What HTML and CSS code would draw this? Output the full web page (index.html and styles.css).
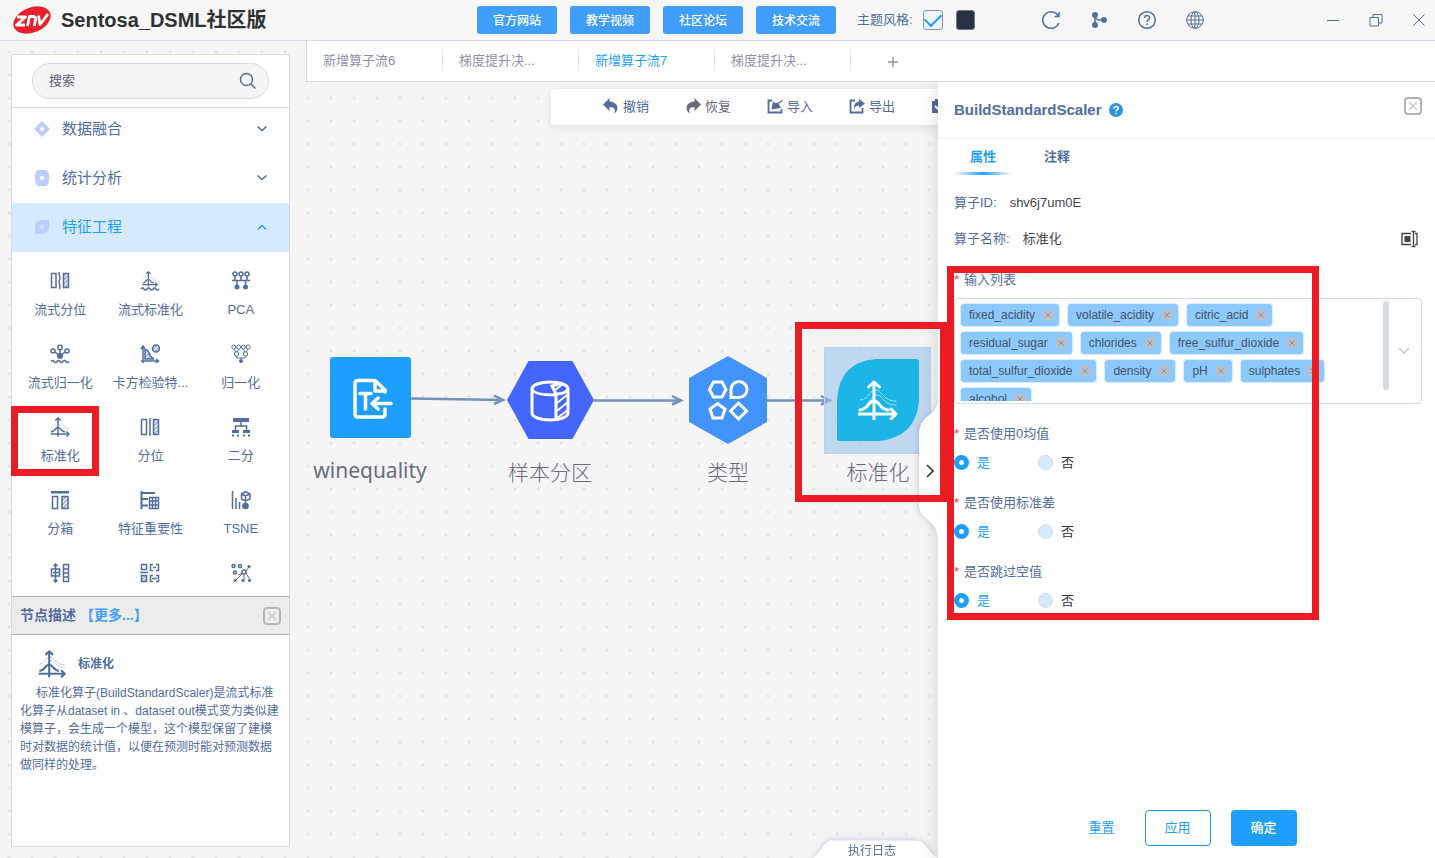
FILE: index.html
```html
<!DOCTYPE html>
<html lang="zh-CN">
<head>
<meta charset="utf-8">
<title>Sentosa_DSML社区版</title>
<link rel="stylesheet" href="styles.css">
</head>
<body>
<svg class="defs" width="0" height="0" aria-hidden="true">
  <defs>
    <pattern id="hatch" width="3" height="3" patternUnits="userSpaceOnUse" patternTransform="rotate(45)"><path d="M1 0v3" stroke="#526d9f" stroke-width="1"/></pattern>
    <symbol id="i-norm" viewBox="0 0 40 40">
      <path d="M16 39V4M10.500 7L16 2l5.500 5" stroke-width="3"/>
      <path d="M1 34h36M33 29l5 5-5 5" stroke-width="3"/>
      <path d="M2 30c9-1 8-9 14-9s5 8 14 9" stroke-width="3"/>
      <path d="M2 20c10-1 9-10 15-10 7 0 8 11 21 11M8 25c6-5 6-10 11-10 5 0 7 10 19 10" stroke-width="1" stroke-dasharray="3 1.500" opacity=".65"/>
    </symbol>
    <symbol id="i-closebox" viewBox="0 0 18 18"><rect x="1" y="1" width="16" height="16" rx="3" fill="none" stroke="#b3b3b3" stroke-width="2"/><path d="M5 5l8 8M13 5l-8 8" stroke="#d6c0c0" stroke-width="1.300"/></symbol>
    <symbol id="i-x" viewBox="0 0 12 12"><circle cx="6" cy="6" r="6" fill="#b9bec9"/><path d="M3.500 3.500l5 5M8.500 3.500l-5 5" stroke="#8b919c"/></symbol>
  </defs>
</svg>
<div class="app">
  <header class="topbar">
    <div class="brand">
      <svg width="38" height="30" viewBox="0 0 38 30"><ellipse cx="19" cy="15" rx="19.500" ry="12.500" transform="rotate(-22 19 15)" fill="#e8202b"/><g fill="none" stroke="#fff" stroke-width="2.800" stroke-linejoin="round"><path d="M4 12h8.500L3.500 20H12"/><path d="M14.500 21l2-9.500h3.500q3 0 2.500 3L21.300 21"/><path d="M25.500 10.500l1.500 9 8-10.500"/></g></svg>
      <h1>Sentosa_DSML社区版</h1>
    </div>
    <nav class="links">
      <button>官方网站</button><button>教学视频</button><button>社区论坛</button><button>技术交流</button>
    </nav>
    <div class="theme">
      <label for="theme-light">主题风格:</label>
      <input type="checkbox" id="theme-light" checked>
      <button class="swatch" aria-label="深色主题"></button>
    </div>
    <div class="utils">
      <button aria-label="刷新"><svg width="20" height="20" viewBox="0 0 20 20"><path d="M17.800 13A8.300 8.300 0 1 1 17 5.500M18 2v4.500h-4.500" class="ln"/></svg></button>
      <button aria-label="流程"><svg width="20" height="20" viewBox="0 0 20 20"><g fill="#526d9f"><circle cx="6" cy="5" r="3"/><circle cx="6" cy="15" r="3"/><circle cx="15" cy="10" r="3"/></g><path d="M6 5v10M6 7.500L9 10h6" class="ln"/></svg></button>
      <button aria-label="帮助"><svg width="20" height="20" viewBox="0 0 20 20"><circle cx="10" cy="10" r="8.300" class="ln"/><path d="M7.500 8c0-3.500 5-3.300 5-.3 0 2-2.500 2-2.500 4.300M10 13.500v1.500" class="ln"/></svg></button>
      <button aria-label="语言"><svg width="20" height="20" viewBox="0 0 20 20"><g class="ln thin"><circle cx="10" cy="10" r="8.300"/><ellipse cx="10" cy="10" rx="4" ry="8.300"/><path d="M10 1.700v16.600M1.700 10h16.600M3 6h14M3 14h14"/></g></svg></button>
    </div>
    <div class="win">
      <button aria-label="最小化"><svg width="14" height="14" viewBox="0 0 14 14"><path d="M1 7.500h12" class="ln thin"/></svg></button>
      <button aria-label="还原"><svg width="14" height="14" viewBox="0 0 14 14"><path d="M1 4.500h8.500v8.500H1zM4 4.500V1.500h9v8.500H9.500" class="ln thin"/></svg></button>
      <button aria-label="关闭"><svg width="14" height="14" viewBox="0 0 14 14"><path d="M1.500 1.500l11 11M12.500 1.500l-11 11" class="ln thin"/></svg></button>
    </div>
  </header>

  <div class="body">
    <aside class="sidebar">
      <div class="search">
        <div class="searchbox">
          <input type="text" placeholder="搜索" aria-label="搜索">
          <svg width="18" height="18" viewBox="0 0 18 18"><circle cx="7.500" cy="7.500" r="6" class="ln"/><path d="M12 12l4.500 4.500" class="ln" stroke-width="2"/></svg>
        </div>
      </div>
      <div class="menu">
        <button class="cat"><svg width="16" height="16" viewBox="0 0 16 16"><path d="M8 0l8 8-8 8-8-8z" fill="#bccdff"/><circle cx="8" cy="8" r="2" fill="#fff"/></svg><span>数据融合</span><svg class="chev" width="12" height="8" viewBox="0 0 12 8"><path d="M1.500 1.500L6 5.500l4.500-4" class="ln"/></svg></button>
        <button class="cat"><svg width="16" height="16" viewBox="0 0 16 16"><path d="M4 0h8q3 2 3 5v6q0 3-3 5H4q-3-2-3-5V5q0-3 3-5z" fill="#bccdff"/><circle cx="8" cy="8" r="2" fill="#fff"/></svg><span>统计分析</span><svg class="chev" width="12" height="8" viewBox="0 0 12 8"><path d="M1.500 1.500L6 5.500l4.500-4" class="ln"/></svg></button>
        <button class="cat open"><svg width="16" height="16" viewBox="0 0 16 16"><path d="M1 15V8Q1 1 8 1h7v7q0 7-7 7z" fill="#bccdff"/><circle cx="8" cy="8" r="2" fill="#d6eafe"/></svg><span>特征工程</span><svg class="chev" width="12" height="8" viewBox="0 0 12 8"><path d="M2 6.500l4-4 4 4" fill="none" stroke="#1e9fff" stroke-width="1.500"/></svg></button>
        <ul class="tools">
          <li><svg viewBox="0 0 20 20"><g class="ln"><rect x="1.500" y="2.500" width="4.500" height="14"/><rect x="13.500" y="2.500" width="5" height="14" fill="url(#hatch)"/><path d="M9.500 1q-1 2 0 4t0 4 0 4 0 5"/></g></svg><span>流式分位</span></li>
          <li><svg viewBox="0 0 20 20"><use href="#i-norm" x="2" y="0" width="16" height="16" class="tint"/><path d="M1 18q1.500-2 3 0t3 0 3 0 3 0 3 0 3 0" class="ln"/></svg><span>流式标准化</span></li>
          <li><svg viewBox="0 0 20 20"><g class="ln"><circle cx="4" cy="3" r="2"/><circle cx="10" cy="3" r="2"/><circle cx="16" cy="3" r="2"/><path d="M4 5v4.500M10 5v4.500M16 5v4.500M1 9.500h18M6 10v6M14.500 10v6"/></g><circle cx="6" cy="16" r="2.500" fill="#526d9f"/><circle cx="14.500" cy="16" r="2.500" fill="#526d9f"/></svg><span>PCA</span></li>
          <li><svg viewBox="0 0 20 20"><g class="ln"><circle cx="3" cy="7" r="2"/><circle cx="10" cy="3.500" r="2.200"/><circle cx="17" cy="7" r="2"/><path d="M10 6v6M5 8l5 4 5-4M1 17.500q1.500-2 3 0t3 0 3 0 3 0 3 0 3 0"/></g><circle cx="10" cy="12" r="3" fill="#526d9f"/></svg><span>流式归一化</span></li>
          <li><svg viewBox="0 0 20 20"><g class="ln"><path d="M3 19V3M1 5l2-3 2 3M1 17h17M16 15l2.500 2-2.500 2"/></g><g fill="url(#hatch)" stroke="#526d9f" stroke-width="1.500"><path d="M5 15V6q3-1 4 3t5 6z"/><circle cx="16" cy="4.500" r="3.500"/></g></svg><span>卡方检验特...</span></li>
          <li><svg viewBox="0 0 20 20"><g class="ln thin"><circle cx="2.800" cy="3" r="2"/><circle cx="7.600" cy="3" r="2"/><circle cx="12.400" cy="3" r="2"/><circle cx="17.200" cy="3" r="2"/><circle cx="5.500" cy="10" r="2.200"/><circle cx="14.500" cy="10" r="2.200"/><path d="M3 5l2 3M8 5L6 8M12 5l2 3M17 5l-2 3M5 12l1 2h8l1-2M10 14v2"/></g><circle cx="10" cy="17" r="2" fill="#526d9f"/></svg><span>归一化</span></li>
          <li><svg viewBox="0 0 20 20"><use href="#i-norm" width="20" height="20" class="tint"/></svg><span>标准化</span></li>
          <li><svg viewBox="0 0 20 20"><g class="ln"><rect x="1.500" y="2.500" width="5" height="15"/><path d="M10 1v18"/><rect x="13.500" y="2.500" width="5" height="15" fill="url(#hatch)"/></g></svg><span>分位</span></li>
          <li><svg viewBox="0 0 20 20"><g fill="#526d9f"><path d="M2 1h16v4H2zM1 13h7v3H1zM12 13h7v3h-7z"/><path d="M1 17.500h2v2H1zM6 17.500h2v2H6zM12 17.500h2v2h-2zM17 17.500h2v2h-2z"/></g><path d="M10 5v4M4.500 13V9h11v4" class="ln"/></svg><span>二分</span></li>
          <li><svg viewBox="0 0 20 20"><path d="M1 1h18v2.500H1z" fill="#526d9f"/><g class="ln"><rect x="2.500" y="6.500" width="5" height="12"/><rect x="12" y="6.500" width="6" height="12" fill="url(#hatch)"/></g></svg><span>分箱</span></li>
          <li><svg viewBox="0 0 20 20"><g fill="none" stroke="#526d9f" stroke-width="2"><path d="M1.500 1v18M1 3h14M1 9h7M1 15.500h7"/></g><path d="M9.500 7.500h9v11h-9zM12.500 7.500v11M15.500 7.500v11M9 11h10M9 15h10" class="ln"/></svg><span>特征重要性</span></li>
          <li><svg viewBox="0 0 20 20"><g class="ln"><path d="M1.500 1v18M5 8v11M8.500 12v7"/><path d="M10.500 4l4-2.500L19 4v5l-4.500 2L10.500 9zM10.500 4l4 2 4.500-2M14.500 6v8"/></g><circle cx="14.500" cy="16" r="3.300" fill="#526d9f"/></svg><span>TSNE</span></li>
          <li><svg viewBox="0 0 20 20"><g class="ln"><path d="M1.500 6h8v7h-8zM5.500 1v18M3.500 3l2-2 2 2M3.500 17l2 2 2-2M3 9.500h7"/><path d="M13.500 1.500h5v17h-5zM13.500 6h5M13.500 10h5M13.500 14h5"/></g></svg></li>
          <li><svg viewBox="0 0 20 20"><g class="ln"><rect x="1.500" y="1.500" width="5" height="5"/><rect x="1.500" y="12.500" width="5" height="6" fill="url(#hatch)"/><path d="M0 9.500h8M13 1.500h-2.500v6H13M16 1.500h2.500v6H16M13 4.500h3M13 12.500h-2.500v6H13M16 12.500h2.500v6H16M12 15.500h5"/></g></svg></li>
          <li><svg viewBox="0 0 20 20"><g class="ln"><circle cx="2.500" cy="3" r="1.500"/><circle cx="9" cy="3" r="1.500"/><circle cx="4" cy="9.500" r="1.500"/><circle cx="13" cy="9" r="2"/></g><path d="M11.500 10.500L4 18M13 11v6M15 10l4 7M15 8l3-4M11 10l-4 2" class="ln thin"/><g fill="#526d9f"><circle cx="18" cy="3.500" r="1.600"/><circle cx="4" cy="17.500" r="1.600"/><circle cx="12" cy="17.500" r="1.600"/><circle cx="18.500" cy="17.500" r="1.500"/></g></svg></li>
        </ul>
      </div>
      <section class="desc">
        <div class="desc-head"><h2>节点描述</h2><a href="#">【更多...】</a><button aria-label="关闭描述"><svg width="18" height="18"><use href="#i-closebox"/></svg></button></div>
        <div class="desc-body">
          <h3><svg width="28" height="28" viewBox="0 0 40 40"><use href="#i-norm" class="tint"/></svg>标准化</h3>
          <p>标准化算子(BuildStandardScaler)是流式标准化算子从dataset in 、dataset out模式变为类似建模算子，会生成一个模型，这个模型保留了建模时对数据的统计值，以便在预测时能对预测数据做同样的处理。</p>
        </div>
      </section>
    </aside>

    <main class="main">
      <div class="tabs">
        <button>新增算子流6</button><button>梯度提升决...</button><button class="on">新增算子流7</button><button>梯度提升决...</button><button class="add" aria-label="新增"><svg width="12" height="12" viewBox="0 0 12 12"><path d="M6 1v10M1 6h10" stroke="#8b92a5" stroke-width="1.400"/></svg></button>
      </div>
      <div class="work">
        <div class="canvas">
          <div class="toolbar">
            <button><svg viewBox="0 0 16 16"><path d="M6.500 0v3.500C13 4 15.500 8 14 12.500q-1 2-3 3 3.500-6-4.500-6.500v4L0 6.500z" fill="#526d9f"/></svg>撤销</button>
            <button class="dim"><svg viewBox="0 0 16 16"><path d="M9.500 0v3.500C3 4 .5 8 2 12.500q1 2 3 3-3.500-6 4.500-6.500v4L16 6.500z" fill="#686d7c"/></svg>恢复</button>
            <button><svg viewBox="0 0 16 16"><path d="M5 2.500H1.500v12h13V11" fill="none" stroke="#526d9f" stroke-width="1.800"/><path d="M16 1q-1 4-4.500 4.500L14 10 4.500 11.500 6 3l2 2q4.500 0 8-4z" fill="#526d9f"/></svg>导入</button>
            <button><svg viewBox="0 0 16 16"><path d="M6 2.500H1.500v12h12V10" fill="none" stroke="#526d9f" stroke-width="1.800"/><path d="M10 1l6 4.500-6 4.500V7.500q-4 0-5 4-1-7 5-8z" fill="#526d9f"/></svg>导出</button>
            <button aria-label="保存"><svg viewBox="0 0 16 16"><path d="M4 3V1h8v2h3v12H1V3z" fill="#526d9f"/><path d="M4 8l3 3 6-5" stroke="#fff" stroke-width="2" fill="none"/></svg></button>
          </div>
          <svg class="edges" width="632" height="400" viewBox="306 82 632 400"><g fill="none" stroke="#7592b9" stroke-width="2.500"><path d="M411 398.500L502 400M494 395.500l9 4.500-9 4"/><path d="M594 400.500H681M672 396l9 4.500-9 4"/><path d="M767 400.500H829M821 396l9 4.500-9 4"/></g></svg>
          <div class="node n1"><svg viewBox="0 0 108 108"><rect x="14" y="13" width="81" height="81" rx="3" fill="#1e9fff"/><g fill="none" stroke="#fff" stroke-width="3.500" stroke-linejoin="round" stroke-linecap="round"><path d="M69 48V46L59 36.500H42q-3 0-3 3V70q0 3 3 3h24q3 0 3-3v-5M59 37v10h9"/><path d="M44 49.500h11M49.500 50v15M75 59.500H57M62 54l-6 5.500 6 5.500"/></g></svg><span>winequality</span></div>
          <div class="node n2"><svg viewBox="0 0 108 108"><path d="M32.500 15h44l21.500 39-21.500 39h-44L11 54z" fill="#4466ff"/><g fill="none" stroke="#fff" stroke-width="3"><path d="M36 43c0-4 8-7 18-7s18 3 18 7v24c0 4-8 7-18 7s-18-3-18-7z"/><path d="M36 43c1 4 10 6 24 6M60 73V48l-4-8 10-3M60 48q10 0 12-5"/></g><path d="M61 57l10-8M61 65l11-9M61 72l11-8M59 44l8-6" fill="none" stroke="#fff" stroke-width="2"/></svg><span>样本分区</span></div>
          <div class="node n3"><svg viewBox="0 0 108 108"><path d="M54 10l39 22v44L54 98 15 76V32z" fill="#4393fd"/><g fill="none" stroke="#fff" stroke-width="3"><path d="M39.500 36h8.500l4 7.500-4 7.500h-8.500l-4-7.500z"/><path d="M57 51.500V43.500a8 8 0 1 1 8 8z"/><path d="M43.500 57.500l7.500 5.500-3 9h-9l-3-9z"/><path d="M64.500 57l8 8-8 8-8-8z"/></g></svg><span>类型</span></div>
          <div class="node n4"><svg viewBox="0 0 108 108"><rect x=".5" y="1.500" width="106" height="106" fill="#a0c5ee" fill-opacity=".62" stroke="#b4d0fa"/><path d="M13 93V54Q15 16 52 13H92q3 0 3 3v39Q92 91 55 95H15q-2 0-2-2z" fill="#1cb5e8"/><use href="#i-norm" x="34" y="34" width="40" height="40" stroke="#fff" fill="none" stroke-linecap="round" stroke-linejoin="round"/></svg><span>标准化</span></div>
          <div class="log"><svg width="126" height="18" viewBox="0 0 126 18"><path d="M0 18Q4 17 10 8T22 .5H104q6 0 12 8t10 9.500z" fill="#fff"/></svg><button>执行日志</button></div>
        </div>

        <section class="drawer">
          <button class="handle" aria-label="收起"><svg width="20" height="138" viewBox="0 0 20 138"><path d="M20 0Q19 9 10 15T1 34v70q0 9 9 15t10 19z" fill="#fff"/><path d="M9 64l6 6-6 6" fill="none" stroke="#333" stroke-width="1.600"/></svg></button>
          <div class="d-head"><h2>BuildStandardScaler</h2><svg width="14" height="14" viewBox="0 0 14 14"><circle cx="7" cy="7" r="7" fill="#3095dd"/><path d="M5 5.500c0-2.800 4.200-2.500 4.200 0C9.200 7 7 7 7 8.500M7 9.700v1.500" fill="none" stroke="#fff" stroke-width="1.500"/></svg><button aria-label="关闭"><svg width="18" height="18"><use href="#i-closebox"/></svg></button></div>
          <div class="d-tabs"><button class="on">属性</button><button>注释</button></div>
          <div class="d-body">
            <div class="info"><span>算子ID:</span><b>shv6j7um0E</b></div>
            <div class="info"><span>算子名称:</span><b>标准化</b><button aria-label="重命名"><svg width="18" height="18" viewBox="0 0 18 18"><path d="M11 3.500H2v11h9M15 3.500h2v11h-2" fill="none" stroke="#444" stroke-width="1.300"/><path d="M4.500 6h6v6h-6z" fill="#444"/><path d="M11.500 1.500h4M13.500 1.500v15M11.500 16.500h4" stroke="#444" stroke-width="1.300"/></svg></button></div>
            <h4>输入列表</h4>
            <div class="multi">
              <ul>
                <li>fixed_acidity<svg><use href="#i-x"/></svg></li><li>volatile_acidity<svg><use href="#i-x"/></svg></li><li>citric_acid<svg><use href="#i-x"/></svg></li><li>residual_sugar<svg><use href="#i-x"/></svg></li><li>chlorides<svg><use href="#i-x"/></svg></li><li>free_sulfur_dioxide<svg><use href="#i-x"/></svg></li><li>total_sulfur_dioxide<svg><use href="#i-x"/></svg></li><li>density<svg><use href="#i-x"/></svg></li><li>pH<svg><use href="#i-x"/></svg></li><li>sulphates<svg><use href="#i-x"/></svg></li><li>alcohol<svg><use href="#i-x"/></svg></li>
              </ul>
              <div class="thumb"></div>
              <button aria-label="展开"><svg width="12" height="8" viewBox="0 0 12 8"><path d="M1 1l5 5 5-5" fill="none" stroke="#c0c4cc" stroke-width="1.300"/></svg></button>
            </div>
            <fieldset><legend>是否使用0均值</legend><label><input type="radio" name="mean" checked><span>是</span></label><label><input type="radio" name="mean"><span>否</span></label></fieldset>
            <fieldset><legend>是否使用标准差</legend><label><input type="radio" name="std" checked><span>是</span></label><label><input type="radio" name="std"><span>否</span></label></fieldset>
            <fieldset><legend>是否跳过空值</legend><label><input type="radio" name="skip" checked><span>是</span></label><label><input type="radio" name="skip"><span>否</span></label></fieldset>
          </div>
          <footer><button class="txt">重置</button><button class="out">应用</button><button class="pri">确定</button></footer>
        </section>
      </div>
    </main>
  </div>
  <div class="mark m1"></div><div class="mark m2"></div><div class="mark m3"></div>
</div>
</body>
</html>
```
FILE: styles.css
```css
* { box-sizing: border-box; }
body, h1, h2, h3, h4, p, ul, fieldset, legend { margin: 0; padding: 0; }
ul { list-style: none; }
fieldset { border: 0; }
body, button, input { font-family: "Liberation Sans", "Noto Sans CJK SC", sans-serif; font-size: 13px; color: #526d9f; }
button { border: 0; background: none; padding: 0; cursor: pointer; display: flex; align-items: center; justify-content: center; }
svg { display: block; flex: none; }
.defs { position: absolute; }
.ln { fill: none; stroke: #526d9f; stroke-width: 1.5; }
.ln.thin, .thin { stroke-width: 1; }
.tint { stroke: #526d9f; fill: none; }

.app {
  position: relative; height: 100vh; display: flex; flex-direction: column; overflow: hidden;
  background: #f5f5f5 radial-gradient(circle at 9px 6px, #e4e4e6 1px, transparent 2px) 0 0 / 23px 23px;
}
.topbar { flex: none; height: 41px; display: flex; align-items: center; background: #f7f7f8; border-bottom: 1px solid #d6dae6; }
.brand { flex: none; width: 477px; padding-left: 13px; display: flex; align-items: center; gap: 10px; }
.brand h1 { font-size: 20px; line-height: 28px; padding-bottom: 1px; color: #303133; }
.links { display: flex; gap: 13px; }
.links button { width: 80px; height: 28px; padding-bottom: 2px; border-radius: 3px; background: #409eff; color: #fff; font-size: 12px; font-weight: 500; }
.theme { display: flex; align-items: center; margin-left: 21px; }
.theme label { padding-bottom: 3px; }
.theme input { appearance: none; width: 20px; height: 20px; margin: 0 13px 0 10px; border: 1px solid #8595b8; border-radius: 3px; background: #eef3fc; display: grid; place-items: center; }
.theme input:checked::after { content: ""; width: 14px; height: 8px; margin-bottom: 5px; border: solid #1e9fff; border-width: 0 0 2px 2px; transform: rotate(-45deg); }
.swatch { width: 19px; height: 20px; border-radius: 3px; background: #293145; border: 1px solid #6d7890; }
.utils { display: flex; gap: 28px; margin-left: 66px; }
.win { display: flex; gap: 29px; margin-left: auto; padding-right: 9px; }

.body { flex: 1; min-height: 0; display: flex; }
.sidebar { flex: none; width: 279px; margin: 13px 16px 11px 11px; background: #fff; border: 1px solid #d6dae6; display: flex; flex-direction: column; }
.search { padding: 8px 20px; border-bottom: 1px solid #d6dae6; }
.searchbox { display: flex; align-items: center; height: 36px; padding: 0 11px 0 16px; border: 1px solid #d6dae6; border-radius: 18px; background: #f5f5f6; }
.searchbox input { flex: 1; min-width: 0; border: 0; padding: 0 0 2px; background: none; outline: 0; }
.searchbox input::placeholder { color: #5c6070; opacity: 1; }
.menu { flex: 1; min-height: 0; overflow: hidden; margin-top: -3px; }
.cat { width: 100%; height: 49px; padding: 0 21px 2px 22px; justify-content: flex-start; gap: 12px; font-size: 15px; }
.cat span { padding-bottom: 3px; }
.cat .chev { margin-left: auto; }
.cat.open, .cat.open span { background: #d6eafe; color: #1e9fff; }
.tools { display: grid; grid-template-columns: repeat(3, 1fr); padding: 19px 3px 0; }
.tools li { height: 73px; display: flex; flex-direction: column; align-items: center; gap: 9px; line-height: 20px; white-space: nowrap; }
.tools svg { width: 20px; height: 20px; }
.desc { flex: none; height: 250px; border-top: 1px solid #b0b0b0; }
.desc-head { height: 38px; padding: 0 8px; display: flex; align-items: center; background: #ececec; border-bottom: 1px solid #b0b0b0; }
.desc-head h2, .desc-head a { font-size: 14px; font-weight: bold; padding-bottom: 3px; }
.desc-head a { color: #409eff; text-decoration: none; margin-left: 4px; }
.desc-head button { margin-left: auto; }
.desc-body { padding: 15px 8px; font-size: 12px; line-height: 18px; }
.desc-body h3 { display: flex; align-items: center; gap: 12px; padding-left: 18px; font-size: 12px; height: 28px; }
.desc-body p { text-indent: 16px; margin-top: 6px; }

.main { flex: 1; min-width: 0; display: flex; flex-direction: column; }
.tabs { flex: none; height: 41px; display: flex; background: #fff; border-left: 1px solid #d6dae6; border-bottom: 1px solid #d6dae6; }
.tabs button { width: 136px; padding: 0 16px 4px; justify-content: flex-start; color: #8b92a5; background: linear-gradient(#fff, #d5d6ea, #fff) right 6px / 1px 28px no-repeat; }
.tabs .on { color: #1e9fff; }
.tabs .add { width: 84px; padding: 2px 0 0; justify-content: center; background: none; }
.work { flex: 1; min-height: 0; display: flex; }
.canvas { flex: 1; min-width: 0; position: relative; overflow: hidden; }
.toolbar { width: 560px; height: 36px; margin: 7px 0 0 245px; padding-left: 52px; display: flex; gap: 35px; background: #fff; border-radius: 4px; box-shadow: 0 2px 10px rgba(0, 0, 0, .1); }
.toolbar button { flex: none; gap: 4px; padding-bottom: 3px; width: 47px; justify-content: flex-start; white-space: nowrap; }
.toolbar .dim { color: #686d7c; }
.toolbar svg { width: 16px; height: 16px; }
.edges { position: absolute; left: 0; top: 0; }
.node { position: absolute; width: 108px; display: flex; flex-direction: column; align-items: center; gap: 4px; font: 300 21px/28px "Noto Sans", "Noto Sans CJK SC", sans-serif; color: #686d7c; white-space: nowrap; }
.node svg { width: 108px; height: 108px; }
.n1 { left: 10px; top: 262px; font-weight: 400; }
.n2 { left: 190px; top: 264px; }
.n3 { left: 368px; top: 264px; }
.n4 { left: 518px; top: 264px; }
.log { position: absolute; right: 0; bottom: 0; height: 18px; filter: drop-shadow(0 0 3px rgba(130, 140, 190, .5)); }
.log button { position: absolute; inset: 4px 6px 0 0; font-size: 12px; line-height: 14px; }

.drawer { flex: none; width: 497px; position: relative; display: flex; flex-direction: column; background: #fff; box-shadow: 0 4px 16px rgba(0, 0, 0, .16); clip-path: inset(0 0 0 -24px); }
.handle { position: absolute; left: -20px; top: 319px; filter: drop-shadow(-2px 0 2px rgba(110, 120, 170, .25)); }
.d-head { height: 57px; padding: 0 13px 0 16px; display: flex; align-items: center; gap: 7px; border-bottom: 1px solid #eceef2; }
.d-head h2 { font-size: 15px; padding-bottom: 1px; }
.d-head button { margin: 0 0 8px auto; }
.d-tabs { display: flex; gap: 16px; padding-left: 16px; }
.d-tabs button { width: 58px; height: 36px; padding-bottom: 3px; font-weight: bold; }
.d-tabs .on { color: #1e9fff; background: linear-gradient(90deg, transparent, #1e9fff, transparent) bottom / 100% 3px no-repeat; }
.d-body { flex: 1; padding: 10px 13px 0 16px; }
.info { display: flex; align-items: center; height: 36px; line-height: 20px; }
.info span, .info b { padding-bottom: 1px; }
.info b { font-weight: normal; color: #444; margin-left: 13px; }
.info button { margin: 0 4px 0 auto; }
h4, legend { font-size: 13px; font-weight: normal; line-height: 20px; }
h4 { margin-top: 13px; }
h4::before, legend::before { content: "*"; color: #f33; margin-right: 5px; }
.multi { position: relative; display: flex; height: 106px; margin: 8px 0 20px; border: 1px solid #d6dae6; border-radius: 4px; }
.multi ul { display: flex; flex-wrap: wrap; align-content: flex-start; gap: 4px 7px; flex: 1; height: 102px; padding: 4px 0 0 5px; overflow: hidden; }
.multi li { height: 24px; display: flex; align-items: center; gap: 7px; padding: 0 5px 0 8px; border: 1px solid #d9ecff; border-radius: 4px; background: #8cc9ff; color: #45525f; font-size: 12px; }
.multi li svg { width: 12px; height: 12px; }
.thumb { flex: none; width: 6px; height: 89px; margin: 2px 0 0 8px; border-radius: 3px; background: #d6dae3; }
.multi button { flex: none; width: 32px; padding-right: 2px; }
fieldset { height: 69px; }
legend { float: left; width: 100%; }
fieldset label { float: left; display: flex; align-items: center; width: 84px; height: 20px; margin-top: 8px; color: #333; }
fieldset label span { padding-bottom: 2px; }
fieldset input { appearance: none; width: 15px; height: 15px; margin: 0 8px 0 0; border: 1px solid #d6dae3; border-radius: 50%; background: #d6eafe; }
fieldset input:checked { border: 5px solid #1e9fff; background: #fff; }
fieldset input:checked + span { color: #1e9fff; }
footer { display: flex; justify-content: center; gap: 20px; padding: 0 0 12px 2px; }
footer button { height: 36px; width: 66px; padding-bottom: 3px; border-radius: 4px; }
footer .txt { width: 46px; color: #1e9fff; }
footer .out { border: 1px solid #1e9fff; color: #1e9fff; }
footer .pri { background: #1e9fff; color: #fff; font-weight: 500; }

.mark { position: absolute; border: 7px solid #ed1c24; pointer-events: none; }
.m1 { left: 11px; top: 406px; width: 88px; height: 70px; }
.m2 { left: 795px; top: 322px; width: 152px; height: 180px; }
.m3 { left: 947px; top: 266px; width: 372px; height: 354px; }
```
